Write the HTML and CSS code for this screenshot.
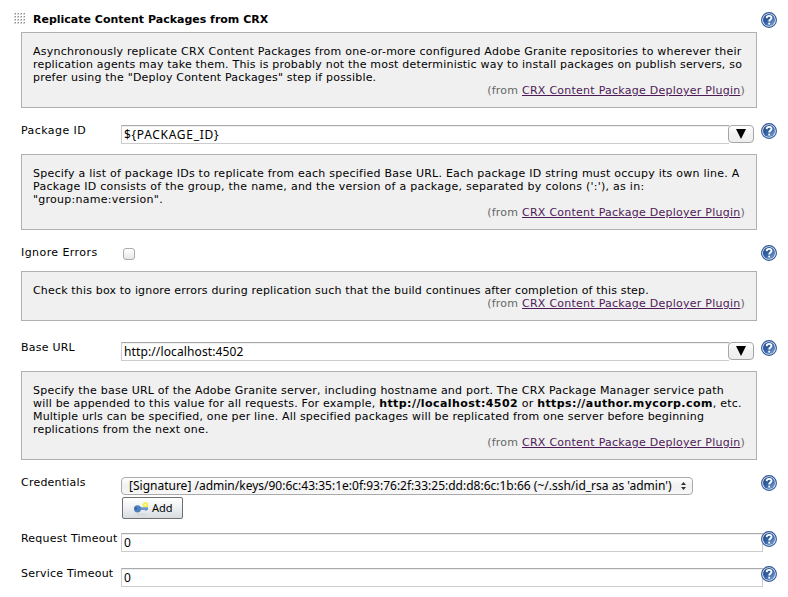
FILE: index.html
```html
<!DOCTYPE html>
<html lang="en">
<head>
<meta charset="utf-8">
<title>Replicate Content Packages from CRX</title>
<link rel="stylesheet" href="styles.css">
</head>
<body>
<svg class="defs" width="0" height="0" aria-hidden="true">
  <defs>
    <linearGradient id="blue" x1="0" y1="0" x2="1" y2="1">
      <stop offset="0" stop-color="#1d4584"/><stop offset=".5" stop-color="#3664a6"/><stop offset="1" stop-color="#85a8d6"/>
    </linearGradient>
    <symbol id="help" viewBox="0 0 16 16">
      <circle cx="8" cy="8" r="7.4" fill="#e6edf7" stroke="#2c5595" stroke-width="1.1"/>
      <circle cx="8" cy="8" r="6" fill="url(#blue)"/>
      <path d="M5.6 6.1C5.7 4.5 6.7 3.8 8.1 3.8C9.6 3.8 10.5 4.6 10.5 5.8C10.5 7.5 8.2 7.6 8.2 9.5M8.2 10.8V12.5" fill="none" stroke="#fff" stroke-width="1.8"/>
    </symbol>
    <pattern id="dots" width="3" height="3" patternUnits="userSpaceOnUse">
      <rect width="2" height="2" fill="#d4d4d4"/><rect x="1" width="1" height="1" fill="#8f8f8f"/>
    </pattern>
  </defs>
</svg>
<main class="form">
  <header class="heading">
    <svg class="grip" width="12" height="12"><rect width="12" height="12" fill="url(#dots)"/></svg>
    <h1>Replicate Content Packages from CRX</h1>
    <svg class="help"><use href="#help"/></svg>
  </header>
  <section class="note note-3">
    <p><span class="l a1">Asynchronously replicate CRX Content Packages from one-or-more configured Adobe Granite repositories to wherever their</span><span class="l a2">replication agents may take them. This is probably not the most deterministic way to install packages on publish servers, so</span><span class="l a3">prefer using the "Deploy Content Packages" step if possible.</span></p>
    <div class="from">(from <a href="#">CRX Content Package Deployer Plugin</a>)</div>
  </section>
  <div class="row row-package">
    <label>Package ID</label>
    <div class="combo"><div class="field caps">${PACKAGE_ID}</div><button class="drop"><svg width="10" height="10"><path d="M0 0H10L5 10Z"/></svg></button></div>
    <svg class="help"><use href="#help"/></svg>
  </div>
  <section class="note note-3">
    <p><span class="l b1">Specify a list of package IDs to replicate from each specified Base URL. Each package ID string must occupy its own line. A</span><span class="l b2">Package ID consists of the group, the name, and the version of a package, separated by colons (':'), as in:</span><span class="l b3">"group:name:version".</span></p>
    <div class="from">(from <a href="#">CRX Content Package Deployer Plugin</a>)</div>
  </section>
  <div class="row row-ignore">
    <label>Ignore Errors</label>
    <div><span class="check"></span></div>
    <svg class="help"><use href="#help"/></svg>
  </div>
  <section class="note note-1">
    <p><span class="l c1">Check this box to ignore errors during replication such that the build continues after completion of this step.</span></p>
    <div class="from">(from <a href="#">CRX Content Package Deployer Plugin</a>)</div>
  </section>
  <div class="row row-base">
    <label>Base URL</label>
    <div class="combo"><div class="field">http://localhost:4502</div><button class="drop"><svg width="10" height="10"><path d="M0 0H10L5 10Z"/></svg></button></div>
    <svg class="help"><use href="#help"/></svg>
  </div>
  <section class="note note-4">
    <p><span class="l d1">Specify the base URL of the Adobe Granite server, including hostname and port. The CRX Package Manager service path</span><span class="l d2">will be appended to this value for all requests. For example, <b>http://localhost:4502</b> or <b>https://author.mycorp.com</b>, etc.</span><span class="l d3">Multiple urls can be specified, one per line. All specified packages will be replicated from one server before beginning</span><span class="l d4">replications from the next one.</span></p>
    <div class="from">(from <a href="#">CRX Content Package Deployer Plugin</a>)</div>
  </section>
  <div class="row row-cred">
    <label>Credentials</label>
    <div>
      <div class="select"><span class="value">[Signature] /admin/keys/90:6c:43:35:1e:0f:93:76:2f:33:25:dd:d8:6c:1b:66 (~/.ssh/id_rsa as 'admin')</span><svg width="5" height="8"><path d="M0 3H5L2.5 0ZM0 5H5L2.5 8Z" fill="#333"/></svg></div>
      <button class="add"><svg width="16" height="16" viewBox="0 0 16 16"><ellipse cx="8" cy="13.5" rx="6" ry="1" fill="#d5d7da"/><circle cx="12.4" cy="4" r="2.7" fill="#f8ee3c"/><circle cx="12.4" cy="4" r="1" fill="#fffbd0"/><path d="M6 6.2H15V9H13.5V10H12.2V9H6Z" fill="#6c97cd"/><circle cx="4.5" cy="7.8" r="3.6" fill="#4f7fbd"/><circle cx="3" cy="7.6" r="1" fill="#2d5590"/></svg><span>Add</span></button>
    </div>
    <svg class="help"><use href="#help"/></svg>
  </div>
  <div class="row row-time">
    <label>Request Timeout</label>
    <div class="field wide">0</div>
    <svg class="help"><use href="#help"/></svg>
  </div>
  <div class="row row-time">
    <label>Service Timeout</label>
    <div class="field wide">0</div>
    <svg class="help"><use href="#help"/></svg>
  </div>
</main>
</body>
</html>
```
FILE: styles.css
```css
* { box-sizing: border-box; }
body { margin: 0; background: #fff; color: #000; font: 11px/13px "DejaVu Sans", Verdana, sans-serif; overflow: hidden; }
.defs { display: block; height: 0; }
.form { width: 788px; height: 597px; }
h1, p { margin: 0; }
h1 { font-size: 11px; line-height: 13px; flex: 1; margin-top: 1px; white-space: nowrap; }
.heading { display: flex; height: 32px; padding: 12px 11px 0 14px; }
.grip { margin: 1px 7px 0 0; display: block; }
.help { width: 16px; height: 16px; display: block; position: relative; z-index: 1; }
.note { width: 736px; margin-left: 21px; padding: 12px 11px 0; border: 1px solid #b0b0b0; background: #f0f0f0; }
.note-3 { height: 76px; }
.note-1 { height: 50px; }
.note-4 { height: 89px; }
.l { display: block; white-space: nowrap; letter-spacing: .19px; }
.a1 { letter-spacing: .254px; }
.b1 { letter-spacing: .24px; }
.b2, .b3 { letter-spacing: .26px; }
.c1 { letter-spacing: .17px; }
.d1 { letter-spacing: .226px; }
.d2 { letter-spacing: .2px; }
.d2 b { letter-spacing: .43px; }
.from { text-align: right; color: #666; white-space: nowrap; letter-spacing: .25px; }
.from a { color: #4d1a57; }
.row { display: grid; grid-template-columns: 100px 640px 16px; padding-left: 21px; align-items: start; }
.row label { margin-top: 1px; white-space: nowrap; letter-spacing: .22px; }
.row-package { height: 46px; padding-top: 15px; }
.row-ignore { height: 41px; padding-top: 15px; }
.row-package label, .row-ignore label { letter-spacing: .43px; }
.row-base { height: 50px; padding-top: 19px; }
.row-cred { height: 60px; padding-top: 15px; }
.row-time { height: 35px; padding-top: 11px; }
.combo { display: flex; width: 633px; margin-top: 2px; }
.field { height: 19px; flex: 1; border: 1px solid #ccc; border-top: 1px solid #aaa; box-shadow: inset 0 1px #eee; padding: 2px 2px 0; font: 12px/13px "Noto Sans", sans-serif; letter-spacing: .12px; }
.caps { letter-spacing: .7px; }
.wide { width: 642px; margin-top: 2px; }
.drop { width: 26px; height: 18px; margin: 0 0 0 -1px; padding: 3px 0 0; border: 1px solid #a5a5a5; border-radius: 4px; background: linear-gradient(#fff, #f1f1f1 50%, #eee); display: flex; justify-content: center; }
.combo .field { border-right: 0; }
.check { display: block; width: 12px; height: 12px; margin: 3px 0 0 2px; border: 1px solid #aaa; border-radius: 3px; background: linear-gradient(#fff, #e8e8e8); }
.select { display: flex; align-items: center; justify-content: space-between; width: 572px; height: 18px; margin-top: 2px; padding: 0 6px 1px 7px; border: 1px solid #aaa; border-radius: 4px; background: linear-gradient(#fff, #f0f0f0 50%, #f8f8f8); font: 12px/13px "Noto Sans", sans-serif; white-space: nowrap; }
.add { display: flex; align-items: center; gap: 3px; width: 61px; height: 22px; margin: 2px 0 0 1px; padding: 0 10px; border: 1px solid #707070; border-radius: 2px; background: linear-gradient(#fff, #eef0f2 50%, #d8dcdf); font: 11px/13px "Noto Sans", sans-serif; color: #000; }
.add svg { flex: none; margin-top: 1px; }
.add span { margin-top: -2px; }
```
